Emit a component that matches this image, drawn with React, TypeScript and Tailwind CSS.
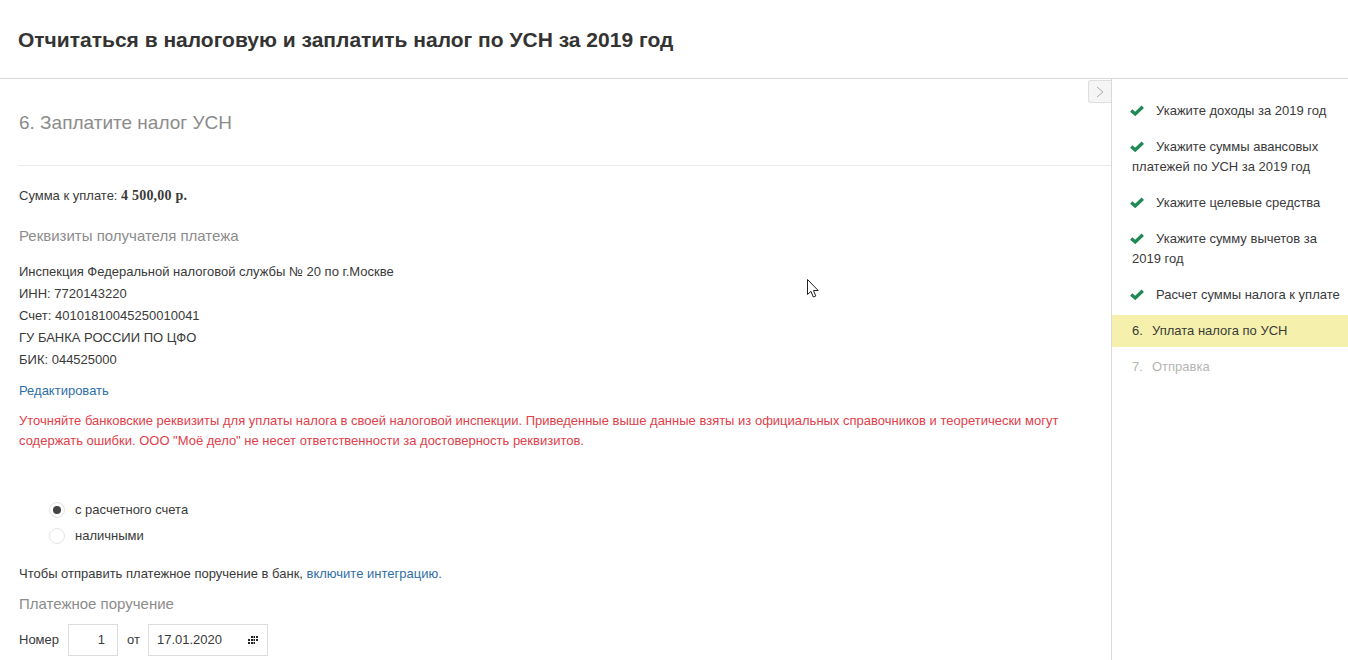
const steps = [
  { text: "Укажите доходы за 2019 год" },
  { text: "Укажите суммы авансовых платежей по УСН за 2019 год" },
  { text: "Укажите целевые средства" },
  { text: "Укажите сумму вычетов за 2019 год" },
  { text: "Расчет суммы налога к уплате" },
];

function Check() {
  return (
    <svg viewBox="0 0 14 11" className="-ml-[2px] mr-[12px] inline-block h-[11px] w-[14px] align-[-1px]">
      <path d="M1.2 5.600 L5.200 9 L12.800 1.800" fill="none" stroke="#1f8a55" strokeWidth="3.300" />
    </svg>
  );
}

export default function App() {
  return (
    <div className="h-[660px] w-[1348px] overflow-hidden bg-white font-['Liberation_Sans',Arial,sans-serif] text-[13px] leading-[22px] text-[#3a3a3a]">
      <header className="flex h-[79px] items-center border-b border-[#d9d9d9] pl-[18px] pt-[2px]">
        <h1 className="text-[21px] font-bold text-[#333]">
          Отчитаться в налоговую и заплатить налог по УСН за 2019 год
        </h1>
      </header>

      <div className="flex h-[581px]">
        <main className="relative w-[1111px] pl-[18px]">
          <button className="absolute right-0 top-[1px] flex h-[23px] w-[23px] items-center justify-center rounded-l-[3px] border border-r-0 border-[#dedede] bg-[#f5f5f5]">
            <svg viewBox="0 0 8 12" className="h-[12px] w-[8px]">
              <path d="M1 1 L7 6 L1 11" fill="none" stroke="#aaa" strokeWidth="1" />
            </svg>
          </button>

          <h2 className="flex h-[86px] items-center pl-px pt-[1px] text-[19px] text-[#8c8c8c]">6. Заплатите налог УСН</h2>
          <div className="border-t border-[#eaeaea] pl-px pt-[19px]">
            <p>
              Сумма к уплате:{" "}
              <b className="font-['Liberation_Serif',serif] text-[14px] tracking-[0.2px]">4 500,00 р.</b>
            </p>
            <h3 className="mt-[18px] text-[15px] text-[#8c8c8c]">Реквизиты получателя платежа</h3>
            <div className="mt-[14px]">
              <div>Инспекция Федеральной налоговой службы № 20 по г.Москве</div>
              <div>ИНН: 7720143220</div>
              <div>Счет: 40101810045250010041</div>
              <div>ГУ БАНКА РОССИИ ПО ЦФО</div>
              <div>БИК: 044525000</div>
            </div>
            <a className="mt-[9px] block text-[#2f6fa8]">Редактировать</a>
            <p className="mt-[9px] w-[1060px] leading-[20px] text-[#e0404a]">
              Уточняйте банковские реквизиты для уплаты налога в своей налоговой инспекции. Приведенные выше данные
              взяты из официальных справочников и теоретически могут содержать ошибки. ООО "Моё дело" не несет
              ответственности за достоверность реквизитов.
            </p>

            <div className="mt-[46px] pl-[30px]">
              <label className="flex h-[26px] items-center gap-[10px]">
                <span className="flex h-[16px] w-[16px] items-center justify-center rounded-full border border-[#e3e3e3]">
                  <span className="h-[8px] w-[8px] rounded-full bg-[#444]" />
                </span>
                с расчетного счета
              </label>
              <label className="flex h-[26px] items-center gap-[10px]">
                <span className="h-[16px] w-[16px] rounded-full border border-[#e3e3e3]" />
                наличными
              </label>
            </div>

            <p className="mt-[14px]">
              Чтобы отправить платежное поручение в банк, <a className="text-[#2f6fa8]">включите интеграцию.</a>
            </p>
            <h3 className="mt-[8px] text-[15px] text-[#8c8c8c]">Платежное поручение</h3>
            <div className="mt-[9px] flex items-center">
              <span>Номер</span>
              <span className="ml-[9px] h-[32px] w-[50px] border border-[#ddd] pr-[12px] text-right leading-[30px]">1</span>
              <span className="ml-[9px]">от</span>
              <span className="ml-[8px] flex h-[32px] w-[120px] items-center justify-between border border-[#ddd] pl-[8px] pr-[9px]">
                17.01.2020
                <svg viewBox="0 0 11 8" className="h-[8px] w-[11px]" fill="#222">
                  <path d="M4 0h2v2H4zM6.500 0H8v2H6.500zM9 0h2v2H9zM1 3h2v2H1zM4 3h2v2H4zM6.500 3H8v2H6.500zM9 3h2v2H9zM1 6h2v2H1zM4 6h2v2H4zM6.500 6H8v2H6.500z" />
                </svg>
              </span>
            </div>
          </div>

          <svg viewBox="0 0 12 19" className="absolute left-[807px] top-[200px] h-[19px] w-[12px]">
            <path
              d="M0.500 0.500 V15.500 L4 12.300 L6.300 18 L8.800 17 L6.500 11.500 H11.200 Z"
              fill="#fff"
              stroke="#222"
              strokeWidth="1"
            />
          </svg>
        </main>

        <aside className="w-[237px] border-l border-[#d9d9d9] pt-[14px] leading-[20px]">
          {steps.map((s) => (
            <div key={s.text} className="py-[8px] pl-[20px] pr-[6px]">
              <Check />
              {s.text}
            </div>
          ))}
          <div className="mt-[2px] flex h-[32px] items-center bg-[#f5f1ac] pl-[20px]">
            <span className="w-[20px]">6.</span>Уплата налога по УСН
          </div>
          <div className="flex h-[40px] items-center pl-[20px] text-[#b5b5b5]">
            <span className="w-[20px]">7.</span>Отправка
          </div>
        </aside>
      </div>
    </div>
  );
}
